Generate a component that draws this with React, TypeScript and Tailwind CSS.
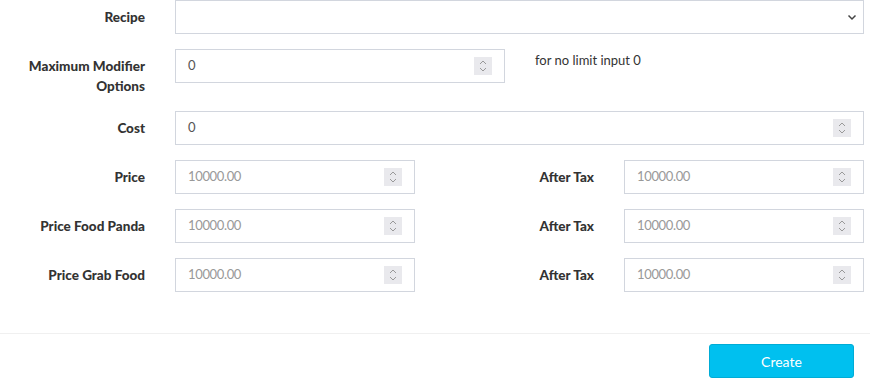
import React from "react";

const Spinner = () => (
  <div className="absolute right-[12px] top-1/2 -translate-y-1/2 w-[18px] h-[18px] bg-[#e9e9ed] flex items-center justify-center">
    <svg width="10" height="14" viewBox="0 0 10 14" fill="none" stroke="#999999" strokeWidth="1">
      <path d="M2 5 L5 2 L8 5" />
      <path d="M2 9 L5 12 L8 9" />
    </svg>
  </div>
);

const NumInput = ({ value, placeholder, className }: { value?: string; placeholder?: string; className: string }) => (
  <div className={`relative h-[34px] border border-[#d2d6de] bg-white ${className}`}>
    <div className={`h-full flex items-center pl-[12px] text-[13px] tracking-[-0.35px] ${value ? "text-[#555]" : "text-[#999]"}`}>
      {value ?? placeholder}
    </div>
    <Spinner />
  </div>
);

const Label = ({ children, className = "" }: { children: React.ReactNode; className?: string }) => (
  <div className={`text-right font-black text-[13.5px] leading-[20px] text-[#333] pt-[7px] ${className}`}>{children}</div>
);

export default function App() {
  const priceRows = ["Price", "Price Food Panda", "Price Grab Food"];
  return (
    <div className="w-[870px] h-[388px] bg-white" style={{ fontFamily: "Lato, 'Liberation Sans', sans-serif" }}>
      <div className="pr-[6px] h-[333px]">
        <div className="flex mb-[15px]">
          <Label className="w-[145px]">Recipe</Label>
          <div className="ml-[30px] flex-1 h-[34px] border border-[#d2d6de] relative">
            <svg className="absolute right-[6px] top-[13px]" width="10" height="7" viewBox="0 0 10 7" fill="none" stroke="#444" strokeWidth="1.5">
              <path d="M1.5 1.5 L5 5 L8.5 1.5" />
            </svg>
          </div>
        </div>
        <div className="flex mb-[15px]">
          <Label className="w-[145px]">
            Maximum Modifier
            <br />
            Options
          </Label>
          <NumInput value="0" className="ml-[30px] w-[330px]" />
          <div className="ml-[30px] text-[13px] leading-[20px] pt-[1px] text-[#333]">for no limit input 0</div>
        </div>
        <div className="flex mb-[15px]">
          <Label className="w-[145px]">Cost</Label>
          <NumInput value="0" className="ml-[30px] flex-1" />
        </div>
        {priceRows.map((r) => (
          <div key={r} className="flex mb-[15px]">
            <Label className="w-[145px]">{r}</Label>
            <NumInput placeholder="10000.00" className="ml-[30px] w-[240px]" />
            <Label className="w-[179px]">After Tax</Label>
            <NumInput placeholder="10000.00" className="ml-[30px] flex-1" />
          </div>
        ))}
      </div>
      <div className="border-t border-[#f0f0f0] flex justify-end pt-[10px] pr-[16px]">
        <button className="w-[145px] h-[34px] bg-[#00c0ef] border border-[#00acd6] rounded-[3px] text-white text-[14px]">
          Create
        </button>
      </div>
    </div>
  );
}
